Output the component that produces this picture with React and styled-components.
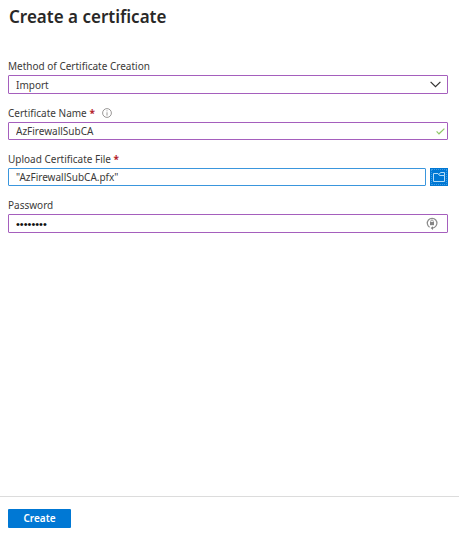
import React, { useState } from 'react'
import styled, { createGlobalStyle } from 'styled-components'

const GlobalStyle = createGlobalStyle`
  * {
    box-sizing: border-box;
  }
  body {
    margin: 0;
    background: #fff;
    color: #3b3a39;
    font-family: 'Noto Sans', 'Open Sans', sans-serif;
    font-size: 10px;
  }
  input, select, button {
    font: inherit;
    color: inherit;
  }
`

const Blade = styled.div`
  min-height: 100vh;
  display: flex;
  flex-direction: column;
`

const Title = styled.h1`
  margin: 0;
  padding: 4px 9px 0;
  font-size: 17px;
  line-height: 25px;
  font-weight: 600;
  color: #292827;
`

const Form = styled.form`
  flex: 1;
  display: flex;
  flex-direction: column;
  gap: 12px;
  padding: 30px 11px 20px 8px;
`

const Field = styled.div`
  display: flex;
  flex-direction: column;
  gap: 2px;
`

const LabelRow = styled.div`
  display: flex;
  align-items: center;
  gap: 7px;
  height: 14px;
  line-height: 14px;
`

const Required = styled.span`
  color: #b3202a;
  font-weight: 700;
`

const Box = styled.div`
  display: flex;
  align-items: center;
  position: relative;
  flex: 1;
  border: 1px solid ${props => props.$color || '#a55fbd'};
  border-radius: 1px;
  background: #fff;
`

const Input = styled.input`
  flex: 1;
  min-width: 0;
  height: 16px;
  padding: 0 7px;
  border: 0;
  outline: 0;
  background: transparent;
`

const PasswordInput = styled(Input)`
  height: 17px;
  font-family: 'Liberation Sans', sans-serif;
  font-size: 11px;
  color: #111;
`

const Select = styled.select`
  flex: 1;
  height: 17px;
  padding: 0 24px 0 7px;
  border: 0;
  outline: 0;
  appearance: none;
  background: transparent;
`

const BoxIcon = styled.svg`
  position: absolute;
  right: ${props => props.$right}px;
  pointer-events: none;
`

const FileRow = styled.div`
  display: flex;
  gap: 4px;
`

const BrowseButton = styled.button`
  display: flex;
  align-items: center;
  justify-content: center;
  width: 18px;
  height: 18px;
  padding: 0;
  border: 1px solid #0078d4;
  background: #0078d4;
  outline: 1px dotted #3f9be3;
  outline-offset: -2px;
`

const Footer = styled.footer`
  padding: 12px 8px 5px;
  border-top: 1px solid #dcdcdc;
`

const CreateButton = styled.button`
  display: block;
  width: 63px;
  height: 19px;
  padding: 0;
  border: 0;
  border-radius: 1px;
  background: #0078d4;
  color: #fff;
  font-weight: 600;
  line-height: 19px;
`

function App() {
  const [ method, setMethod ] = useState('Import')
  const [ name, setName ] = useState('AzFirewallSubCA')
  const [ file, setFile ] = useState('"AzFirewallSubCA.pfx"')
  const [ password, setPassword ] = useState('password')

  return (
    <Blade>
      <GlobalStyle />
      <Title>Create a certificate</Title>
      <Form id="certificate" onSubmit={e => e.preventDefault()}>
        <Field>
          <LabelRow><label htmlFor="method">Method of Certificate Creation</label></LabelRow>
          <Box>
            <Select id="method" value={method} onChange={e => setMethod(e.target.value)}>
              <option>Import</option>
              <option>Generate</option>
            </Select>
            <BoxIcon $right={6} width="11" height="7" viewBox="0 0 11 7" fill="none" stroke="#323130" strokeWidth="1.2">
              <path d="M.6 .8 5.5 5.7 10.4 .8" />
            </BoxIcon>
          </Box>
        </Field>
        <Field>
          <LabelRow>
            <label htmlFor="name">Certificate Name <Required>*</Required></label>
            <svg width="10" height="10" viewBox="0 0 10 10" fill="none" stroke="#807e7c" strokeWidth=".8">
              <circle cx="5" cy="5" r="4.4" />
              <path d="M5 4.3V7.6M5 2.4V3.3" />
            </svg>
          </LabelRow>
          <Box>
            <Input id="name" value={name} onChange={e => setName(e.target.value)} />
            <BoxIcon $right={2} width="9" height="7" viewBox="0 0 9 7" fill="none" stroke="#8fc866" strokeWidth="1.2">
              <path d="M.6 3.4 3 5.8 8.4 .6" />
            </BoxIcon>
          </Box>
        </Field>
        <Field>
          <LabelRow><label htmlFor="file">Upload Certificate File <Required>*</Required></label></LabelRow>
          <FileRow>
            <Box $color="#3a96dd">
              <Input id="file" value={file} onChange={e => setFile(e.target.value)} />
            </Box>
            <BrowseButton type="button" aria-label="Browse">
              <svg width="12" height="10" viewBox="0 0 12 10" fill="none" stroke="#b5dcf7">
                <path d="M.5 1.5H5L6.5 3.5H11.5V9.5H.5ZM6 2.5 7.5 .5H11.5V3.5" />
              </svg>
            </BrowseButton>
          </FileRow>
        </Field>
        <Field>
          <LabelRow><label htmlFor="password">Password</label></LabelRow>
          <Box>
            <PasswordInput id="password" type="password" value={password} onChange={e => setPassword(e.target.value)} />
            <BoxIcon $right={9} width="12" height="13" viewBox="0 0 12 13" fill="none" stroke="#8c8c8c" strokeWidth="1.2">
              <path d="M3.6 10.2A4.8 4.8 0 1 1 8.6 10.2L6.4 11.2" />
              <path d="M4.7 5V4.3A1.3 1.3 0 0 1 7.3 4.3V5" strokeWidth=".9" />
              <path d="M4 5H8V8.2H4Z" fill="#858585" stroke="none" />
              <path d="M7 9.2V13L4.6 11.1Z" fill="#808080" stroke="none" />
            </BoxIcon>
          </Box>
        </Field>
      </Form>
      <Footer>
        <CreateButton type="submit" form="certificate">Create</CreateButton>
      </Footer>
    </Blade>
  );
}

export default App;
